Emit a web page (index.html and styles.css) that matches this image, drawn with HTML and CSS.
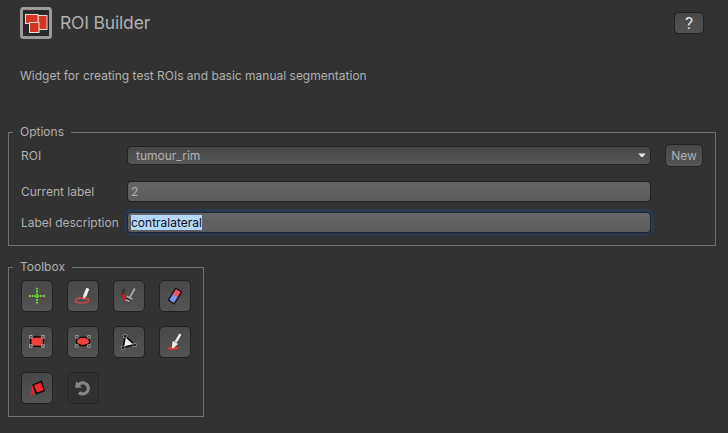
FILE: index.html
```
<!DOCTYPE html>
<html lang="en">
<head>
<meta charset="utf-8">
<title>ROI Builder</title>
<link rel="stylesheet" href="styles.css">
</head>
<body>
<header class="header">
  <svg class="logo" width="32" height="32" viewBox="0 0 32 32">
    <rect x="1.5" y="1.5" width="29" height="29" rx="2" fill="#292929" stroke="#9b9b9b" stroke-width="3"/>
    <g fill="#d53621" stroke="#e4dddd" stroke-width="1">
      <rect x="18" y="8.5" width="9" height="14"/>
      <rect x="5.5" y="7.5" width="12.5" height="9"/>
      <rect x="9.5" y="15.5" width="9.5" height="10"/>
    </g>
  </svg>
  <h1 class="title">ROI Builder</h1>
  <button class="button help">?</button>
</header>
<p class="intro">Widget for creating test ROIs and basic manual segmentation</p>

<fieldset class="group options">
  <legend>Options</legend>
  <div class="form">
    <label>ROI</label>
    <div class="combo"><span>tumour_rim</span>
      <svg width="8" height="5" viewBox="0 0 8 5"><path d="M.3.5h7.4L4.8 4H3.2z" fill="#e6e6e6"/></svg>
    </div>
    <button class="button new">New</button>
    <label class="current">Current label</label>
    <div class="field current">2</div>
    <label class="description">Label description</label>
    <div class="field focused description"><span class="selected">contralateral</span></div>
  </div>
</fieldset>

<fieldset class="group toolbox">
  <legend>Toolbox</legend>
  <div class="tools">
    <button class="button tool"><svg viewBox="0 0 32 32"><path d="M16 7.8v17M8 16h17" fill="none" stroke="#62e52c" stroke-width="1.9" stroke-dasharray="1.8 1"/></svg></button>
    <button class="button tool"><svg viewBox="0 0 32 32"><ellipse cx="15" cy="20.6" rx="6.7" ry="2.6" fill="none" stroke="#df4045" stroke-width="1.3"/><path d="M20.9 8.4l-3.2 7.6" stroke="#f2f0e9" stroke-width="3.2"/><path d="M16.1 15.3l3.1 1.3-2.9 2.4z" fill="#f2f0e9"/></svg></button>
    <button class="button tool"><svg viewBox="0 0 32 32"><path d="M11.7 9c-2 2.5-2.4 5-1.6 8" fill="none" stroke="#333" stroke-width="2.8"/><path d="M10 14c.2 3 1.5 5.2 4.5 6.5" fill="none" stroke="#c91c1c" stroke-width="2.8"/><path d="M21.8 8.5l-4.8 8.7" stroke="#aaa" stroke-width="1.7"/><path d="M13.7 16.2l5.8 3" stroke="#aaa" stroke-width="1.7"/><path d="M13.2 17.6l5.3 2.7-2 2.5-3.8-2.1z" fill="#222"/><path d="M12.5 19.8l4.6 1.8" stroke="#b9aaa6" stroke-width="1.6"/></svg></button>
    <button class="button tool"><svg viewBox="0 0 32 32"><g transform="rotate(32 16 16)"><path d="M12.6 15.5h6.8V23h-6.8z" fill="#7395f3"/><path d="M12.6 9h6.8v6.7h-6.8z" fill="#f15566"/><path d="M12.6 9h6.8v14h-6.8z" fill="none" stroke="#121218" stroke-width="1.3"/></g></svg></button>
    <button class="button tool"><svg viewBox="0 0 32 32"><rect x="9.8" y="11" width="12.6" height="9.4" fill="#f0413f" stroke="#100" stroke-width="1.4"/><g fill="#544" stroke="#aaa" stroke-width=".9"><path d="M8.5 9.5h2.7v2.7H8.5zM20.6 9.5h2.7v2.7h-2.7zM8.5 18.6h2.7v2.7H8.5zM20.6 18.6h2.7v2.7h-2.7z"/></g></svg></button>
    <button class="button tool"><svg viewBox="0 0 32 32"><ellipse cx="16" cy="15.4" rx="6.7" ry="4.3" fill="#f0413f" stroke="#100" stroke-width="1.4"/><g fill="#454545" stroke="#999" stroke-width=".9"><path d="M8.5 9.5h2.7v2.7H8.5zM20.6 9.5h2.7v2.7h-2.7zM8.5 18.6h2.7v2.7H8.5zM20.6 18.6h2.7v2.7h-2.7z"/></g></svg></button>
    <button class="button tool"><svg viewBox="0 0 32 32"><path d="M12.3 10.2l9.3 8.4-11.4 2.9z" fill="#f0f0f0" stroke="#080808" stroke-width="1.6"/><g fill="#111" stroke="#999" stroke-width=".8"><path d="M10.6 8.6h3.2v3.2h-3.2zM20 17.4h3.2v3.2H20zM8.6 20.1h3.2v3.2H8.6z"/></g></svg></button>
    <button class="button tool"><svg viewBox="0 0 32 32"><ellipse cx="14.2" cy="22.1" rx="5.7" ry="1.6" fill="#ee3336"/><path d="M21.4 8.2l-4.7 8" stroke="#efede9" stroke-width="2.5"/><path d="M13.7 14.7l5.3 3.2-5 4.6-1.2-.8z" fill="#efede9"/></svg></button>
    <button class="button tool"><svg viewBox="0 0 32 32"><path d="M12 12.9l8.4-3.3 3 8.9-7.8 3.3z" fill="#ff2428" stroke="#0c0c0c" stroke-width="1.5"/><path d="M11.9 14.2c-1.2 0-1.5.8-1.4 2.3l.2 4.4-2.5 1.5h6l-1.8-1.5z" fill="#ef292c"/></svg></button>
    <button class="button tool disabled"><svg viewBox="0 0 32 32"><path d="M11.2 13.1A5.6 5.6 0 1 1 12 20.5" fill="none" stroke="#858585" stroke-width="3.2"/><path d="M9.2 9.3l-1 6.5h6.7z" fill="#858585"/></svg></button>
  </div>
</fieldset>
</body>
</html>
```
FILE: styles.css
```
* { box-sizing: border-box; }

body {
  margin: 0;
  height: 433px;
  padding: 7px 12px 0 8px;
  overflow: hidden;
  background: #323232;
  color: #b0b0b0;
  font: 12px/16px Inter, sans-serif;
}

.header {
  display: flex;
  align-items: center;
  height: 32px;
  padding: 0 12px;
}

.title {
  margin: 0 auto 0 8px;
  font-size: 17.5px;
  font-weight: 400;
  line-height: 24px;
  letter-spacing: -0.18px;
}

.button {
  display: flex;
  align-items: center;
  justify-content: center;
  padding: 0;
  border: 1px solid #212121;
  border-radius: 5px;
  background: linear-gradient(#484848, #535353);
  color: #b0b0b0;
  font: inherit;
}

.help {
  width: 30px;
  height: 22px;
  color: #e4e4e4;
  font: 17px/20px Roboto, sans-serif;
}

.intro { margin: 29px 12px 40px; white-space: nowrap; }

.group {
  margin: 0;
  padding: 0 12px;
  border: 1px solid #717171;
}

.group legend {
  height: 16px;
  margin-left: -8px;
  padding: 0 7px;
}

.options { height: 122px; }

.form {
  display: grid;
  grid-template-columns: 106px 524px 38px;
  grid-template-rows: 23px 14px 21px 10px 21px;
  column-gap: 0;
  align-items: center;
  margin-top: 4px;
}

.form label {
  grid-column: 1;
  white-space: nowrap;
}

.combo,
.field {
  display: flex;
  grid-column: 2;
  align-items: center;
  border: 1px solid #212121;
  border-radius: 4px;
}

.combo {
  justify-content: space-between;
  height: 19px;
  padding: 0 4px 0 8px;
  background: linear-gradient(#484848, #565656);
}

.new {
  grid-column: 3;
  width: 38px;
  height: 23px;
  margin-left: 14px;
}

.field {
  height: 21px;
  padding-left: 3px;
  background: linear-gradient(#666, #5c5c5c);
}

.current { grid-row: 3; }
.description { grid-row: 5; }

.focused {
  border-color: #1c2634;
  box-shadow: 0 0 0 3px #2c384d;
}

.selected {
  background: #b3d7ff;
  color: #111;
  line-height: 15px;
}

.toolbox {
  width: 196px;
  height: 158px;
  margin-top: 13px;
}

.tools {
  display: grid;
  grid-template-columns: repeat(4, 32px);
  grid-auto-rows: 32px;
  gap: 14px;
  margin-top: 5px;
}

.tool svg { flex: none; width: 32px; height: 32px; }

.disabled {
  border-color: #252525;
  background: #303030;
}
```
